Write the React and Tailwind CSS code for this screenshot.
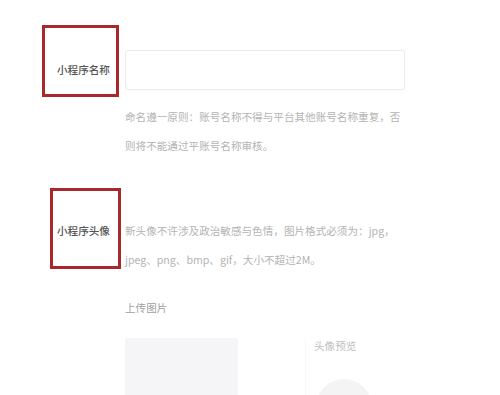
export default function App() {
  const font = { fontFamily: '"Noto Sans CJK SC", "Noto Sans", sans-serif' };

  return (
    <div className="w-[500px] h-[395px] overflow-hidden bg-white" style={font}>
      <div className="pt-[25px] pl-[42px]">
        {/* 名称 */}
        <div className="flex items-start">
          <div className="box-border w-[77px] h-[72px] border-[3px] border-[#a8282b] pt-[34px] pl-[12px]">
            <span className="block text-[10.6px] leading-[16px] font-medium text-[#555]">小程序名称</span>
          </div>
          <div className="ml-[6px] mt-[25px]">
            <div className="w-[280px] h-[40px] border border-[#ebebeb] rounded-[3px] bg-white"></div>
            <div className="mt-[12px] text-[10.6px] leading-[29px] text-[#b3b3b3]">
              <p>命名遵一原则：账号名称不得与平台其他账号名称重复，否</p>
              <p>则将不能通过平账号名称审核。</p>
            </div>
          </div>
        </div>

        {/* 头像 */}
        <div className="flex items-start mt-[28px]">
          <div className="ml-[8px] box-border w-[71px] h-[81px] border-[3px] border-[#a8282b] pt-[32px] pl-[4px]">
            <span className="block text-[10.6px] leading-[16px] font-medium text-[#555]">小程序头像</span>
          </div>
          <div className="ml-[4px] mt-[28px]">
            <div className="text-[10.6px] leading-[29px] text-[#b3b3b3]">
              <p>新头像不许涉及政治敏感与色情，图片格式必须为：jpg，</p>
              <p>jpeg、png、bmp、gif，大小不超过2M。</p>
            </div>
            <p className="mt-[24px] text-[10.6px] leading-[20px] text-[#a0a0a0]">上传图片</p>
            <div className="flex items-start mt-[20px]">
              <div className="w-[113px] h-[80px] bg-[#f5f5f7] rounded-[2px]"></div>
              <div className="ml-[67px] border-l border-[#f8f8f8] pl-[8px]">
                <p className="text-[10.6px] leading-[16px] text-[#c0c0c0]">头像预览</p>
                <div className="mt-[25px] ml-[2px] w-[56px] h-[56px] rounded-full bg-[#f4f4f4]"></div>
              </div>
            </div>
          </div>
        </div>
      </div>
    </div>
  );
}
